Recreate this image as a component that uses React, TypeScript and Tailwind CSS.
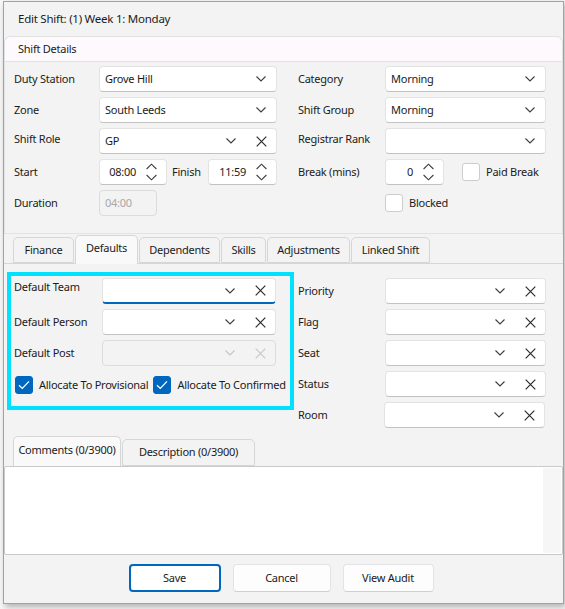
import clsx from 'clsx'

function Chevron({ color = '#3c3c3c' }: { color?: string }) {
  return (
    <svg width="10" height="6" viewBox="0 0 10 6" fill="none">
      <path d="M0.5 0.5L5 5L9.5 0.5" stroke={color} strokeWidth="1.1" />
    </svg>
  )
}

function Cross({ color = '#2a2a2a' }: { color?: string }) {
  return (
    <svg width="11" height="11" viewBox="0 0 11 11" fill="none">
      <path d="M0.7 0.7L10.3 10.3M10.3 0.7L0.7 10.3" stroke={color} strokeWidth="1.2" />
    </svg>
  )
}

function SpinArrows() {
  return (
    <svg width="11" height="18" viewBox="0 0 11 18" fill="none">
      <path d="M0.6 6L5.5 1.2L10.4 6" stroke="#3c3c3c" strokeWidth="1.1" />
      <path d="M0.6 12L5.5 16.8L10.4 12" stroke="#3c3c3c" strokeWidth="1.1" />
    </svg>
  )
}

function Check() {
  return (
    <svg width="12" height="10" viewBox="0 0 12 10" fill="none">
      <path d="M1 5.2L4.3 8.4L11 1.4" stroke="white" strokeWidth="1.3" />
    </svg>
  )
}

type SelectProps = {
  value?: string
  clear?: boolean
  disabled?: boolean
  focused?: boolean
  className: string
}

function Select({ value, clear, disabled, focused, className }: SelectProps) {
  return (
    <div
      className={clsx(
        'flex h-[26px] items-center rounded-[4px] border',
        disabled
          ? 'border-[#dcdcdc] bg-[#f3f3f3]'
          : focused
            ? 'border-[#e3e3e3] border-b-2 border-b-[#0067c0] bg-white'
            : 'border-[#e3e3e3] border-b-[#c2c2c2] bg-white',
        className,
      )}
    >
      <span className="flex-1 truncate pl-[5px]">{value}</span>
      <span className="flex w-[30px] justify-center">
        <Chevron color={disabled ? '#c4c4c4' : '#3c3c3c'} />
      </span>
      {clear && (
        <span className="flex w-[30px] justify-center">
          <Cross color={disabled ? '#c8c8c8' : '#2a2a2a'} />
        </span>
      )}
    </div>
  )
}

function Spinner({ value, className }: { value: string; className: string }) {
  return (
    <div
      className={clsx(
        'flex h-[26px] items-center rounded-[4px] border border-[#e3e3e3] border-b-[#c2c2c2] bg-white',
        className,
      )}
    >
      <span className="flex-1 text-right">{value}</span>
      <span className="flex w-[30px] justify-center">
        <SpinArrows />
      </span>
    </div>
  )
}

function Checkbox({ checked, label }: { checked?: boolean; label: string }) {
  return (
    <div className="flex items-center gap-[6px] whitespace-nowrap">
      <span
        className={clsx(
          'flex h-[18px] w-[18px] shrink-0 items-center justify-center rounded-[3px] border',
          checked ? 'border-[#0067c0] bg-[#0067c0]' : 'border-[#cdcdcd] bg-white',
        )}
      >
        {checked && <Check />}
      </span>
      <span>{label}</span>
    </div>
  )
}

function Row({ label, labelClass, children }: { label: string; labelClass: string; children: React.ReactNode }) {
  return (
    <div className="flex h-[26px] items-center whitespace-nowrap">
      <span className={labelClass}>{label}</span>
      {children}
    </div>
  )
}

function Tab({ label, active, className }: { label: string; active?: boolean; className: string }) {
  return (
    <div
      className={clsx(
        'flex items-center justify-center rounded-t-[5px] border border-[#d6d6d6]',
        active ? '-mb-px h-[29px] border-b-0 bg-[#f9f9f9] pb-[3px]' : 'h-[26px] bg-[#f3f3f3]',
        className,
      )}
    >
      {label}
    </div>
  )
}

export default function App() {
  return (
    <div className="relative h-[609px] w-[565px] overflow-hidden bg-[#f7f7f7] font-['Noto_Sans',sans-serif] text-[11px] tracking-[-0.25px] text-[#1b1b1b]">
      <div className="ml-[3px] mt-[1px] flex h-[603px] w-[561px] flex-col border border-[#a3a3a3] bg-[#f3f3f3] shadow-[2px_3px_6px_rgba(0,0,0,0.28)]">
        {/* title */}
        <div className="flex h-[34px] items-center pl-[14px] text-[11.5px]">Edit Shift: (1) Week 1: Monday</div>

        {/* Shift Details group */}
        <div className="rounded-t-[6px] border border-[#e2e2e2]">
          <div className="flex h-[25px] items-center rounded-t-[6px] border-b border-[#e2e2e2] bg-[#fdf9fd] pl-[13px]">
            Shift Details
          </div>
          <div className="flex gap-[21px] pb-[17px] pl-[9px] pt-[4px]">
            <div className="flex flex-col gap-[5px]">
              <Row label="Duty Station" labelClass="w-[85px]">
                <Select value="Grove Hill" className="w-[178px]" />
              </Row>
              <Row label="Zone" labelClass="w-[85px]">
                <Select value="South Leeds" className="w-[178px]" />
              </Row>
              <Row label="Shift Role" labelClass="w-[85px] -mt-[4px]">
                <Select value="GP" clear className="w-[178px]" />
              </Row>
              <Row label="Start" labelClass="w-[85px]">
                <Spinner value="08:00" className="w-[68px]" />
                <span className="w-[41px] pl-[5px]">Finish</span>
                <Spinner value="11:59" className="w-[69px]" />
              </Row>
              <Row label="Duration" labelClass="w-[85px]">
                <div className="flex h-[26px] w-[58px] items-center rounded-[4px] border border-[#dcdcdc] bg-[#f3f3f3] pl-[5px] text-[#a8a8a8]">
                  04:00
                </div>
              </Row>
            </div>
            <div className="flex flex-col gap-[5px]">
              <Row label="Category" labelClass="w-[87px]">
                <Select value="Morning" className="w-[161px]" />
              </Row>
              <Row label="Shift Group" labelClass="w-[87px]">
                <Select value="Morning" className="w-[161px]" />
              </Row>
              <Row label="Registrar Rank" labelClass="w-[87px] -mt-[4px]">
                <Select className="w-[161px]" />
              </Row>
              <Row label="Break (mins)" labelClass="w-[87px]">
                <Spinner value="0" className="w-[59px]" />
                <span className="ml-[18px]">
                  <Checkbox label="Paid Break" />
                </span>
              </Row>
              <Row label="" labelClass="w-[87px]">
                <Checkbox label="Blocked" />
              </Row>
            </div>
          </div>
        </div>

        {/* tabs */}
        <div className="mt-[1px] flex h-[29px] items-end gap-[1px] border-b border-[#d6d6d6] pl-[9px]">
          <Tab label="Finance" className="w-[61px]" />
          <Tab label="Defaults" active className="w-[63px]" />
          <Tab label="Dependents" className="w-[81px]" />
          <Tab label="Skills" className="w-[45px]" />
          <Tab label="Adjustments" className="w-[83px]" />
          <Tab label="Linked Shift" className="w-[79px]" />
        </div>

        <div className="flex gap-[4px] pl-[3px] pt-[8px]">
          <div className="h-[138px] w-[287px] shrink-0 border-4 border-[#00e1ff] pl-[3px] pt-[2px]">
            <div className="flex flex-col gap-[5px]">
              <Row label="Default Team" labelClass="w-[88px] -mt-[8px]">
                <Select clear focused className="w-[174px]" />
              </Row>
              <Row label="Default Person" labelClass="w-[88px]">
                <Select clear className="w-[174px]" />
              </Row>
              <Row label="Default Post" labelClass="w-[88px]">
                <Select clear disabled className="w-[174px]" />
              </Row>
            </div>
            <div className="ml-[1px] mt-[10px] flex gap-[5px]">
              <Checkbox checked label="Allocate To Provisional" />
              <Checkbox checked label="Allocate To Confirmed" />
            </div>
          </div>
          <div className="flex flex-col gap-[5px] pt-[6px]">
            <Row label="Priority" labelClass="w-[87px]">
              <Select clear className="w-[161px]" />
            </Row>
            <Row label="Flag" labelClass="w-[87px]">
              <Select clear className="w-[161px]" />
            </Row>
            <Row label="Seat" labelClass="w-[87px]">
              <Select clear className="w-[161px]" />
            </Row>
            <Row label="Status" labelClass="w-[87px]">
              <Select clear className="w-[161px]" />
            </Row>
            <Row label="Room" labelClass="w-[86px]">
              <Select clear className="w-[161px]" />
            </Row>
          </div>
        </div>

        {/* comments / description */}
        <div className="mt-[8px] flex h-[30px] items-end gap-[1px] pl-[9px]">
          <div className="-mb-px flex h-[31px] w-[108px] items-center justify-center rounded-t-[5px] border border-b-0 border-[#d6d6d6] bg-[#f9f9f9] pb-[3px]">
            Comments (0/3900)
          </div>
          <div className="flex h-[27px] w-[133px] items-center justify-center rounded-t-[5px] border border-[#d6d6d6] bg-[#f3f3f3]">
            Description (0/3900)
          </div>
        </div>
        <div className="flex h-[89px] rounded-[2px] border border-[#c9c9c9] bg-white">
          <div className="flex-1" />
          <div className="my-px mr-px w-[18px] bg-[#f6f6f6]" />
        </div>

        {/* buttons */}
        <div className="flex justify-center gap-[12px] pr-[5px] pt-[9px]">
          <button className="h-[28px] w-[92px] rounded-[4px] border-2 border-[#0067c0] bg-white">Save</button>
          <button className="h-[28px] w-[98px] rounded-[4px] border border-[#e3e3e3] border-b-[#cfcfcf] bg-[#fdfdfd]">
            Cancel
          </button>
          <button className="h-[28px] w-[91px] rounded-[4px] border border-[#e3e3e3] border-b-[#cfcfcf] bg-[#fdfdfd]">
            View Audit
          </button>
        </div>
      </div>
    </div>
  )
}
